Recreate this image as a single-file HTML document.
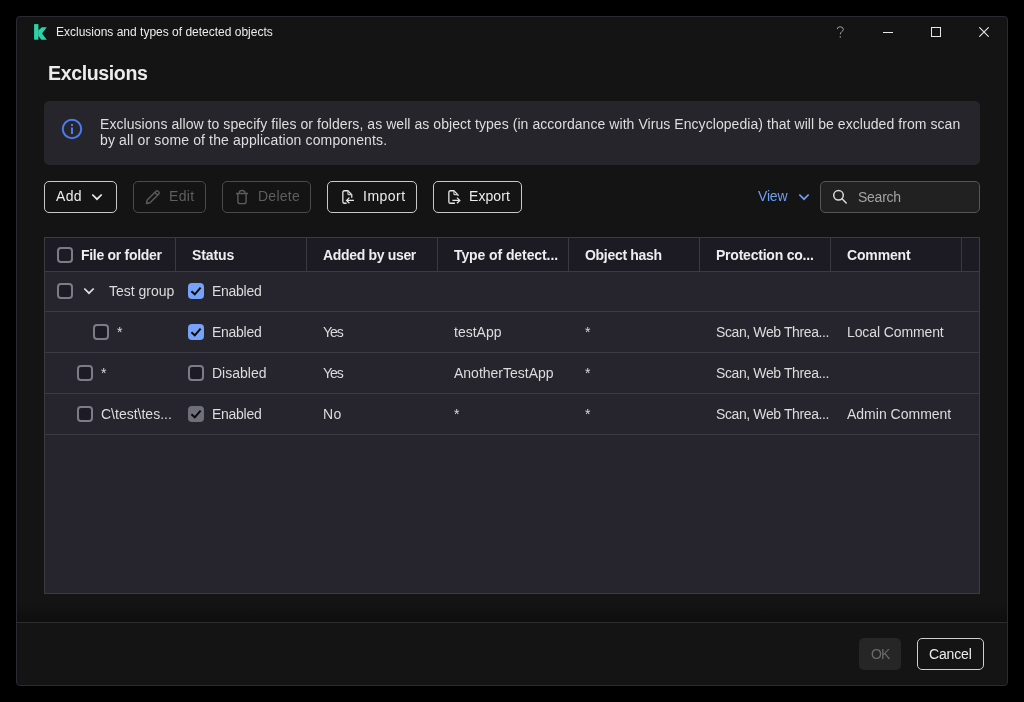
<!DOCTYPE html>
<html><head><meta charset="utf-8">
<style>
*{box-sizing:border-box;margin:0;padding:0}
html,body{width:1024px;height:702px;background:#000;overflow:hidden;font-family:"Liberation Sans",sans-serif;-webkit-font-smoothing:antialiased}
.abs{position:absolute}
.win{position:absolute;left:16px;top:16px;width:992px;height:670px;background:#141414;border:1px solid #2a2a32;border-radius:4px;overflow:hidden}
.t{position:absolute;white-space:nowrap;line-height:14px;font-size:14px;color:#dcdcdc}
.btn{position:absolute;top:181px;height:32px;border:1px solid #c9c9c9;border-radius:5px;background:#141414}
.btn.dis{border-color:#4a4a4a}
.cb{position:absolute;width:16px;height:16px;border:2px solid #7c7c86;border-radius:4px;background:#1d1c25}
.cbk{position:absolute;width:16px;height:16px;border-radius:4px;background:#76a3f9}
.cbg{position:absolute;width:16px;height:16px;border-radius:4px;background:#6f6f79}
.hd{position:absolute;white-space:nowrap;font-size:14px;line-height:14px;font-weight:700;color:#eeeeee;letter-spacing:-0.25px}
.vdiv{position:absolute;top:238px;width:1px;height:33px;background:#3a3a42}
.hline{position:absolute;left:45px;width:934px;height:1px;background:#3c3b44}
</style></head><body><div id="root" style="position:absolute;left:0;top:0;width:1024px;height:702px;will-change:transform">
<div class="win"></div>

<!-- title bar -->
<svg class="abs" style="left:30px;top:22px" width="20" height="20" viewBox="0 0 20 20">
  <rect x="4.1" y="2.1" width="4.3" height="15.6" fill="#2bd3a6"/>
  <path d="M8.2 8.6 L11.97 5.27 L16.8 5.27 L11.97 11.4 L16.8 17.66 L11.4 17.66 L8.2 13.7 Z" fill="#2bd3a6"/>
</svg>
<div class="t" style="left:56px;top:26px;font-size:12px;line-height:12px;color:#ececec">Exclusions and types of detected objects</div>
<svg class="abs" style="left:836px;top:26px" width="9" height="12" viewBox="0 0 9 12"><path d="M1.2 3.2 Q1.2 0.8 4.2 0.8 Q7.3 0.8 7.3 3.3 Q7.3 4.8 5.6 5.8 Q4.3 6.6 4.3 8.3" fill="none" stroke="#a0a0a0" stroke-width="1"/><rect x="3.7" y="10.3" width="1.2" height="1.3" fill="#a0a0a0"/></svg>
<div class="abs" style="left:883px;top:32px;width:10px;height:1px;background:#e8e8e8"></div>
<div class="abs" style="left:931px;top:27px;width:10px;height:10px;border:1px solid #e8e8e8"></div>
<svg class="abs" style="left:979px;top:27px" width="10" height="10" viewBox="0 0 10 10"><path d="M0.3 0.3 L9.7 9.7 M9.7 0.3 L0.3 9.7" stroke="#e8e8e8" stroke-width="1.1"/></svg>

<!-- heading -->
<div class="t" style="left:48px;top:64px;font-size:19.6px;line-height:19px;font-weight:700;color:#ececec;letter-spacing:-0.4px">Exclusions</div>

<!-- info box -->
<div class="abs" style="left:44px;top:101px;width:936px;height:64px;background:#26252b;border-radius:5px"></div>
<svg class="abs" style="left:61px;top:118px" width="22" height="22" viewBox="0 0 22 22">
  <circle cx="11" cy="11" r="9.2" fill="none" stroke="#4b7bf0" stroke-width="2"/>
  <rect x="10" y="9.5" width="2" height="6.5" fill="#4b7bf0"/>
  <rect x="10" y="6" width="2" height="2" fill="#4b7bf0"/>
</svg>
<div class="t" style="left:100px;top:116px;line-height:16px;color:#dedede"><span style="letter-spacing:0.06px">Exclusions allow to specify files or folders, as well as object types (in accordance with Virus Encyclopedia) that will be excluded from scan</span><br><span style="letter-spacing:0.14px">by all or some of the application components.</span></div>

<!-- toolbar -->
<div class="btn" style="left:44px;width:73px"></div>
<div class="t" style="left:56px;top:189px;color:#ececec;letter-spacing:0.3px">Add</div>
<svg class="abs" style="left:91px;top:192px" width="12" height="9" viewBox="0 0 12 9"><path d="M1.3 2.5 L6 7.2 L10.7 2.5" fill="none" stroke="#ececec" stroke-width="1.7"/></svg>

<div class="btn dis" style="left:133px;width:73px"></div>
<svg class="abs" style="left:145px;top:189px" width="16" height="16" viewBox="0 0 16 16"><path d="M1.5 14.5 L2.2 11 L11 2.2 Q12 1.3 13 2.2 L13.8 3 Q14.7 4 13.8 5 L5 13.8 Z M9.9 3.6 L12.4 6.1" fill="none" stroke="#5c5c5c" stroke-width="1.4" stroke-linejoin="round"/></svg>
<div class="t" style="left:169px;top:189px;color:#5e5e5e;letter-spacing:0.3px">Edit</div>

<div class="btn dis" style="left:222px;width:89px"></div>
<svg class="abs" style="left:235px;top:189px" width="14" height="16" viewBox="0 0 14 16"><path d="M1 4.5 H13 M4.3 4.5 V3.5 Q4.3 1.5 7 1.5 Q9.8 1.5 9.8 3.5 V4.5 M2.9 4.5 V12.4 Q2.9 14.6 5.1 14.6 H8.9 Q11.1 14.6 11.1 12.4 V4.5" fill="none" stroke="#5c5c5c" stroke-width="1.4" stroke-linejoin="round"/></svg>
<div class="t" style="left:258px;top:189px;color:#5e5e5e;letter-spacing:0.25px">Delete</div>

<div class="btn" style="left:327px;width:90px"></div>
<svg class="abs" style="left:341px;top:189px" width="16" height="16" viewBox="0 0 16 16"><path d="M5.6 14.25 H3.4 Q1.85 14.25 1.85 12.7 V3.3 Q1.85 1.75 3.4 1.75 H6.9 L10.75 5.7 V8.8" fill="none" stroke="#e6e6e6" stroke-width="1.3" stroke-linejoin="round"/><path d="M6.9 1.9 V4.7 Q6.9 5.6 7.8 5.6 H10.6" fill="none" stroke="#c4c4c4" stroke-width="1.2"/><path d="M12.9 11.4 H5.8 M8.4 8.6 L5.6 11.4 L8.4 14.2" fill="none" stroke="#e6e6e6" stroke-width="1.3"/></svg>
<div class="t" style="left:363px;top:189px;color:#ececec;letter-spacing:0.5px">Import</div>

<div class="btn" style="left:433px;width:89px"></div>
<svg class="abs" style="left:447px;top:189px" width="16" height="16" viewBox="0 0 16 16"><path d="M7.9 14.25 H3.4 Q1.85 14.25 1.85 12.7 V3.3 Q1.85 1.75 3.4 1.75 H6.9 L11 5.9 V6.9" fill="none" stroke="#e6e6e6" stroke-width="1.3" stroke-linejoin="round"/><path d="M6.9 1.9 V4.7 Q6.9 5.6 7.8 5.6 H10.8" fill="none" stroke="#c4c4c4" stroke-width="1.2"/><path d="M5.4 11.4 H12.6 M10.0 8.6 L12.8 11.4 L10.0 14.2" fill="none" stroke="#e6e6e6" stroke-width="1.3"/></svg>
<div class="t" style="left:469px;top:189px;color:#ececec;letter-spacing:0.08px">Export</div>

<div class="t" style="left:758px;top:189px;color:#6f9ef5;letter-spacing:-0.2px">View</div>
<svg class="abs" style="left:798px;top:192px" width="12" height="9" viewBox="0 0 12 9"><path d="M1.3 2.5 L6 7.2 L10.7 2.5" fill="none" stroke="#6f9ef5" stroke-width="1.7"/></svg>

<div class="abs" style="left:820px;top:181px;width:160px;height:32px;background:#212121;border:1px solid #555;border-radius:5px"></div>
<svg class="abs" style="left:832px;top:189px" width="16" height="16" viewBox="0 0 16 16"><circle cx="6.5" cy="6.3" r="4.8" fill="none" stroke="#dadada" stroke-width="1.5"/><path d="M10 9.8 L14.2 14" stroke="#dadada" stroke-width="1.5" stroke-linecap="round"/></svg>
<div class="t" style="left:858px;top:190px;color:#a4a4a4;letter-spacing:-0.25px">Search</div>

<!-- table -->
<div class="abs" style="left:44px;top:237px;width:936px;height:357px;border:1px solid #3c3c3f;background:#26252d"></div>
<div class="abs" style="left:45px;top:238px;width:934px;height:33px;background:#1c1b23"></div>
<div class="hline" style="top:271px"></div>
<div class="vdiv" style="left:175px"></div>
<div class="vdiv" style="left:306px"></div>
<div class="vdiv" style="left:437px"></div>
<div class="vdiv" style="left:568px"></div>
<div class="vdiv" style="left:699px"></div>
<div class="vdiv" style="left:830px"></div>
<div class="vdiv" style="left:961px"></div>

<div class="cb" style="left:57px;top:247px"></div>
<div class="hd" style="left:81px;top:248px;letter-spacing:-0.29px">File or folder</div>
<div class="hd" style="left:192px;top:248px;letter-spacing:-0.11px">Status</div>
<div class="hd" style="left:323px;top:248px;letter-spacing:-0.33px">Added by user</div>
<div class="hd" style="left:454px;top:248px;letter-spacing:-0.09px">Type of detect...</div>
<div class="hd" style="left:585px;top:248px;letter-spacing:-0.3px">Object hash</div>
<div class="hd" style="left:716px;top:248px;letter-spacing:-0.22px">Protection co...</div>
<div class="hd" style="left:847px;top:248px;letter-spacing:-0.15px">Comment</div>

<div class="hline" style="top:311px"></div>
<div class="hline" style="top:352px"></div>
<div class="hline" style="top:393px"></div>
<div class="hline" style="top:434px"></div>

<!-- group row -->
<div class="cb" style="left:57px;top:283px"></div>
<svg class="abs" style="left:83px;top:286px" width="12" height="9" viewBox="0 0 12 9"><path d="M1.3 2.5 L6 7.2 L10.7 2.5" fill="none" stroke="#e0e0e0" stroke-width="1.7"/></svg>
<div class="t" style="left:109px;top:284px">Test group</div>
<div class="cbk" style="left:188px;top:283px"><svg width="16" height="16" viewBox="0 0 16 16" style="position:absolute;left:0;top:0"><path d="M3.4 8.2 L6.8 11.3 L12.6 4.6" fill="none" stroke="#0a0a0a" stroke-width="2"/></svg></div>
<div class="t" style="left:212px;top:284px;letter-spacing:-0.28px">Enabled</div>

<!-- row 2 -->
<div class="cb" style="left:93px;top:324px"></div>
<div class="t" style="left:117px;top:325px">*</div>
<div class="cbk" style="left:188px;top:324px"><svg width="16" height="16" viewBox="0 0 16 16" style="position:absolute;left:0;top:0"><path d="M3.4 8.2 L6.8 11.3 L12.6 4.6" fill="none" stroke="#0a0a0a" stroke-width="2"/></svg></div>
<div class="t" style="left:212px;top:325px;letter-spacing:-0.28px">Enabled</div>
<div class="t" style="left:323px;top:325px;letter-spacing:-1px">Yes</div>
<div class="t" style="left:454px;top:325px">testApp</div>
<div class="t" style="left:585px;top:325px">*</div>
<div class="t" style="left:716px;top:325px;letter-spacing:-0.39px">Scan, Web Threa...</div>
<div class="t" style="left:847px;top:325px;letter-spacing:-0.11px">Local Comment</div>

<!-- row 3 -->
<div class="cb" style="left:77px;top:365px"></div>
<div class="t" style="left:101px;top:366px">*</div>
<div class="cb" style="left:188px;top:365px"></div>
<div class="t" style="left:212px;top:366px">Disabled</div>
<div class="t" style="left:323px;top:366px;letter-spacing:-1px">Yes</div>
<div class="t" style="left:454px;top:366px">AnotherTestApp</div>
<div class="t" style="left:585px;top:366px">*</div>
<div class="t" style="left:716px;top:366px;letter-spacing:-0.39px">Scan, Web Threa...</div>

<!-- row 4 -->
<div class="cb" style="left:77px;top:406px"></div>
<div class="t" style="left:101px;top:407px">C\test\tes...</div>
<div class="cbg" style="left:188px;top:406px"><svg width="16" height="16" viewBox="0 0 16 16" style="position:absolute;left:0;top:0"><path d="M3.4 8.2 L6.8 11.3 L12.6 4.6" fill="none" stroke="#0a0a0a" stroke-width="2"/></svg></div>
<div class="t" style="left:212px;top:407px;letter-spacing:-0.28px">Enabled</div>
<div class="t" style="left:323px;top:407px;letter-spacing:0.5px">No</div>
<div class="t" style="left:454px;top:407px">*</div>
<div class="t" style="left:585px;top:407px">*</div>
<div class="t" style="left:716px;top:407px;letter-spacing:-0.39px">Scan, Web Threa...</div>
<div class="t" style="left:847px;top:407px">Admin Comment</div>

<!-- footer -->
<div class="abs" style="left:17px;top:603px;width:990px;height:19px;background:linear-gradient(to bottom,rgba(0,0,0,0),rgba(0,0,0,0.32))"></div>
<div class="abs" style="left:17px;top:622px;width:990px;height:1px;background:#2c2c2d"></div>
<div class="abs" style="left:859px;top:638px;width:42px;height:32px;background:#262626;border-radius:5px"></div>
<div class="t" style="left:871px;top:647px;color:#6a6a6a;letter-spacing:-0.8px">OK</div>
<div class="abs" style="left:917px;top:638px;width:67px;height:32px;border:1px solid #cfcfcf;border-radius:5px;background:#141414"></div>
<div class="t" style="left:929px;top:647px;color:#ececec;letter-spacing:-0.15px">Cancel</div>
</div></body></html>
